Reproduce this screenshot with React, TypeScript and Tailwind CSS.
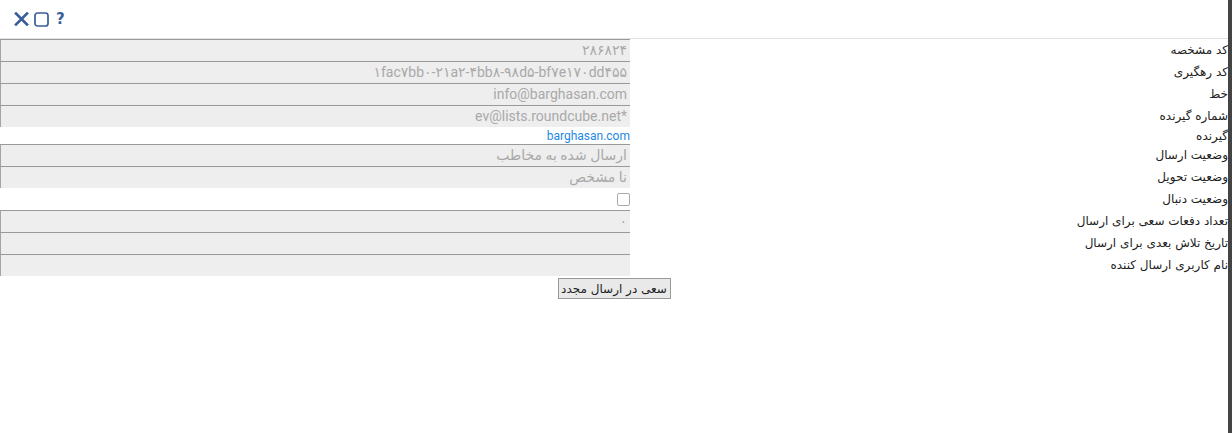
import React from "react";

const rows: { label: string; kind: "input" | "link" | "check"; value?: string }[] = [
  { label: "کد مشخصه", kind: "input", value: "۲۸۶۸۲۴" },
  { label: "کد رهگیری", kind: "input", value: "۱fac۷bb۰-۲۱a۲-۴bb۸-۹۸d۵-bf۷e۱۷۰dd۴۵۵" },
  { label: "خط", kind: "input", value: "info@barghasan.com" },
  { label: "شماره گیرنده", kind: "input", value: "*ev@lists.roundcube.net" },
  { label: "گیرنده", kind: "link", value: "barghasan.com" },
  { label: "وضعیت ارسال", kind: "input", value: "ارسال شده به مخاطب" },
  { label: "وضعیت تحویل", kind: "input", value: "نا مشخص" },
  { label: "وضعیت دنبال", kind: "check" },
  { label: "تعداد دفعات سعی برای ارسال", kind: "input", value: "۰" },
  { label: "تاریخ تلاش بعدی برای ارسال", kind: "input", value: "" },
  { label: "نام کاربری ارسال کننده", kind: "input", value: "" },
];

export default function App() {
  return (
    <div className="flex h-[433px] w-[1232px] bg-[#444]">
      <div className="h-full w-[1228px] bg-white">
        <div className="flex h-[39px] items-center gap-[5px] border-b border-[#e2e2e2] pl-[14px]">
          <svg width="15" height="14" viewBox="0 0 15 14">
            <path d="M2 1.5 L13 12.5 M13 1.5 L2 12.5" stroke="#3b5d9b" strokeWidth="2.6" strokeLinecap="square" />
          </svg>
          <svg width="15" height="15" viewBox="0 0 15 15">
            <rect x="1" y="1" width="13" height="13" rx="2.5" fill="none" stroke="#3b5d9b" strokeWidth="1.7" />
          </svg>
          <span className="ml-[2px] text-[15px] font-bold leading-none text-[#3b5d9b] [font-family:'DejaVu_Sans',sans-serif]">?</span>
        </div>
        <table dir="rtl" className="w-full border-collapse [font-family:'DejaVu_Sans',sans-serif]">
          <tbody>
            {rows.map((r) => (
              <tr key={r.label}>
                <td className="w-[598px] p-0 align-middle text-[12px] leading-[14px] text-[#222]">{r.label}</td>
                <td className="w-[630px] p-0 align-middle">
                  {r.kind === "input" && (
                    <div className="flex h-[22px] items-center border-t border-l border-t-[#999] border-l-[#a5a5a5] bg-[#eeeeee] pr-[3px] text-[14px] text-[#a9a9a9] [font-family:Roboto,'DejaVu_Sans',sans-serif]">
                      {r.value}
                    </div>
                  )}
                  {r.kind === "link" && (
                    <div className="flex h-[17px] items-center text-[12px] text-[#1e88e5] [font-family:Roboto,'DejaVu_Sans',sans-serif]">
                      {r.value}
                    </div>
                  )}
                  {r.kind === "check" && (
                    <div className="flex h-[22px] items-center">
                      <span className="block h-[13px] w-[13px] rounded-[2px] border border-[#aaa] bg-white" />
                    </div>
                  )}
                </td>
              </tr>
            ))}
          </tbody>
        </table>
        <div className="mt-[2px] flex justify-center">
          <button className="h-[21px] w-[113px] border border-[#999] bg-[#e9e9e9] text-[12px] leading-none text-[#222] [font-family:'DejaVu_Sans',sans-serif]" dir="rtl">
            سعی در ارسال مجدد
          </button>
        </div>
      </div>
    </div>
  );
}
